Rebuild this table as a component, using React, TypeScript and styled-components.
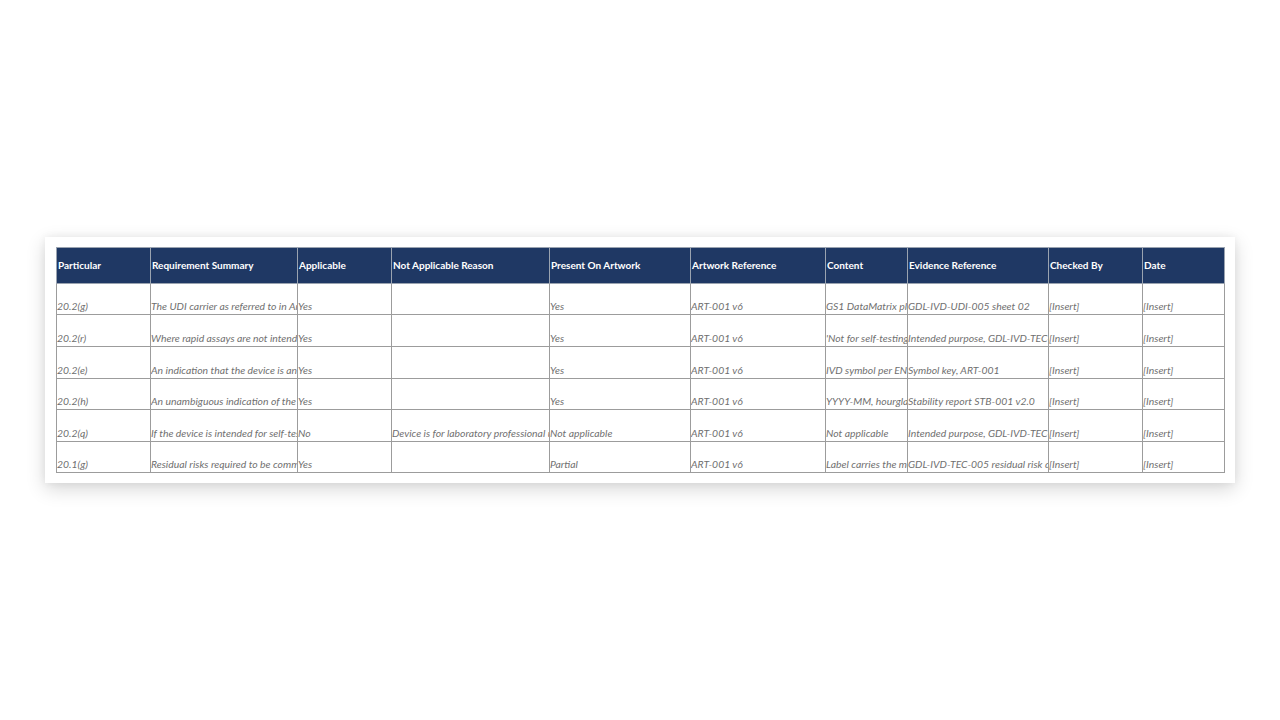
import styled, { createGlobalStyle } from 'styled-components'

const GlobalStyle = createGlobalStyle`
  html, body {
    margin: 0;
    padding: 0;
    background: #ffffff;
  }
  body {
    font-family: Lato, "Open Sans", "Liberation Sans", sans-serif;
  }
`

const Page = styled.div`
  min-height: 100vh;
  display: flex;
  align-items: center;
  justify-content: center;
`

const Card = styled.div`
  width: 1190px;
  box-sizing: border-box;
  padding: 10px 11px;
  background: #ffffff;
  box-shadow: 0 6px 18px rgba(0, 0, 0, 0.16), 0 0 8px rgba(0, 0, 0, 0.06);
`

const Table = styled.table`
  width: 1168px;
  table-layout: fixed;
  border-collapse: collapse;
  font-size: 10px;
`

const HeadCell = styled.th<{ $w: number }>`
  width: ${({ $w }) => $w}px;
  height: 36px;
  box-sizing: border-box;
  padding: 0 1px 2px;
  background: #1f3864;
  color: #ffffff;
  font-weight: 700;
  text-align: left;
  vertical-align: middle;
  white-space: nowrap;
  overflow: hidden;
  border: 1px solid #9aa3b0;
`

const Row = styled.tr<{ $h: number }>`
  height: ${({ $h }) => $h}px;
`

const Cell = styled.td`
  box-sizing: border-box;
  padding: 0 0 2px;
  color: #707070;
  font-size: 10.4px;
  font-style: italic;
  text-align: left;
  vertical-align: bottom;
  white-space: nowrap;
  overflow: hidden;
  border: 1px solid #9c9c9c;
  line-height: 12px;
`

const columns = [
  { label: 'Particular', w: 94 },
  { label: 'Requirement Summary', w: 147 },
  { label: 'Applicable', w: 94 },
  { label: 'Not Applicable Reason', w: 158 },
  { label: 'Present On Artwork', w: 141 },
  { label: 'Artwork Reference', w: 135 },
  { label: 'Content', w: 82 },
  { label: 'Evidence Reference', w: 141 },
  { label: 'Checked By', w: 94 },
  { label: 'Date', w: 82 },
]

const rows = [
  [
    '20.2(g)',
    'The UDI carrier as referred to in Article 24 and Annex VI',
    'Yes',
    '',
    'Yes',
    'ART-001 v6',
    'GS1 DataMatrix placed on outer carton',
    'GDL-IVD-UDI-005 sheet 02',
    '[Insert]',
    '[Insert]',
  ],
  [
    '20.2(r)',
    'Where rapid assays are not intended for self-testing, a statement',
    'Yes',
    '',
    'Yes',
    'ART-001 v6',
    "'Not for self-testing' statement",
    'Intended purpose, GDL-IVD-TEC-001',
    '[Insert]',
    '[Insert]',
  ],
  [
    '20.2(e)',
    'An indication that the device is an in vitro diagnostic medical device',
    'Yes',
    '',
    'Yes',
    'ART-001 v6',
    'IVD symbol per EN ISO 15223-1',
    'Symbol key, ART-001',
    '[Insert]',
    '[Insert]',
  ],
  [
    '20.2(h)',
    'An unambiguous indication of the time limit for using the device',
    'Yes',
    '',
    'Yes',
    'ART-001 v6',
    'YYYY-MM, hourglass symbol',
    'Stability report STB-001 v2.0',
    '[Insert]',
    '[Insert]',
  ],
  [
    '20.2(q)',
    'If the device is intended for self-testing or near-patient testing',
    'No',
    'Device is for laboratory professional use only',
    'Not applicable',
    'ART-001 v6',
    'Not applicable',
    'Intended purpose, GDL-IVD-TEC-001',
    '[Insert]',
    '[Insert]',
  ],
  [
    '20.1(g)',
    'Residual risks required to be communicated to the user',
    'Yes',
    '',
    'Partial',
    'ART-001 v6',
    'Label carries the main warnings',
    'GDL-IVD-TEC-005 residual risk discussion',
    '[Insert]',
    '[Insert]',
  ],
]

const rowHeights = [31, 32, 32, 31, 32, 31]

export default function App() {
  return (
    <>
      <GlobalStyle />
      <Page>
        <Card>
          <Table>
            <thead>
              <tr>
                {columns.map((c) => (
                  <HeadCell key={c.label} $w={c.w}>
                    {c.label}
                  </HeadCell>
                ))}
              </tr>
            </thead>
            <tbody>
              {rows.map((r, i) => (
                <Row key={i} $h={rowHeights[i]}>
                  {r.map((v, j) => (
                    <Cell key={j}>{v}</Cell>
                  ))}
                </Row>
              ))}
            </tbody>
          </Table>
        </Card>
      </Page>
    </>
  )
}
